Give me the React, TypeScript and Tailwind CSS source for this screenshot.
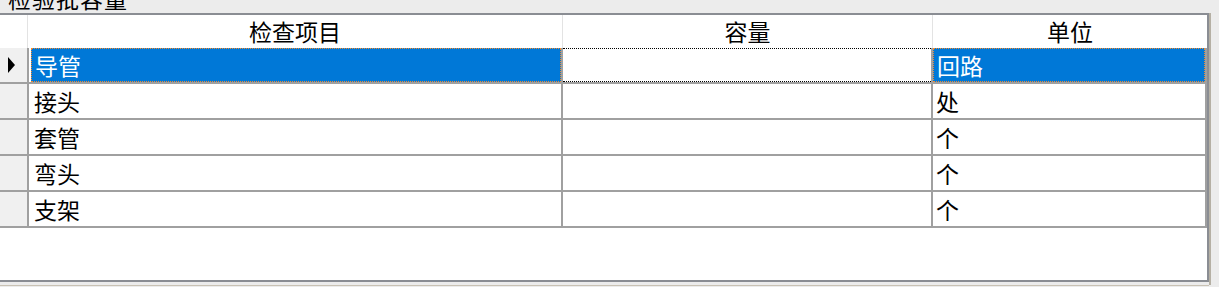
import React from 'react';

interface Row {
  name: string;
  qty: string;
  unit: string;
}

const rows: Row[] = [
  { name: '导管', qty: '', unit: '回路' },
  { name: '接头', qty: '', unit: '处' },
  { name: '套管', qty: '', unit: '个' },
  { name: '弯头', qty: '', unit: '个' },
  { name: '支架', qty: '', unit: '个' },
];

const font = { fontFamily: '"Noto Sans CJK SC", "Noto Sans", sans-serif' };

function RowArrow() {
  return (
    <svg width="7" height="16" viewBox="0 0 7 16">
      <polygon points="0,0 7,8 0,16" fill="#000" />
    </svg>
  );
}

export default function App() {
  return (
    <div className="w-[1219px] h-[287px] bg-[#ececec] overflow-hidden text-black" style={font}>
      {/* group caption, clipped at the top */}
      <div className="h-[13px] overflow-hidden pl-[8px]">
        <div className="-mt-[15px] text-[23px] leading-[26px] tracking-[1px]">检验批容量</div>
      </div>

      <div className="flex">
        <div className="w-[1209px] h-[269px] border-t-2 border-r-2 border-b-2 border-[#8a8d93] bg-white">
          {/* header */}
          <div className="flex h-[33px] text-[23px] leading-none">
            <div className="w-[27px] bg-white" />
            <div className="w-[1px] bg-[#e3e3e3]" />
            <div className="w-[534px] flex items-center justify-center">检查项目</div>
            <div className="w-[1px] bg-[#e3e3e3]" />
            <div className="w-[369px] flex items-center justify-center">容量</div>
            <div className="w-[1px] bg-[#e3e3e3]" />
            <div className="flex-1 flex items-center justify-center">单位</div>
          </div>

          {rows.map((r, i) => {
            const sel = i === 0;
            return (
              <div key={r.name} className="flex h-[36px] border-b-2 border-[#a0a0a0] text-[23px] leading-none">
                <div className="w-[27px] bg-[#f0f0f0] flex items-center pl-[8px]">
                  {sel && <RowArrow />}
                </div>
                <div className="w-[2px] bg-[#a0a0a0]" />
                <div className="w-[532px] flex">
                  {sel ? (
                    <div className="flex-1 ml-[2px] bg-[#0078d7] text-white border border-dotted border-[#f58b2c] flex items-center pl-[3px]">
                      {r.name}
                    </div>
                  ) : (
                    <div className="flex-1 flex items-center pl-[5px]">{r.name}</div>
                  )}
                </div>
                <div className="w-[2px] bg-[#a0a0a0]" />
                <div className="w-[368px] flex">
                  {sel ? (
                    <div className="flex-1 border-t border-b border-dotted border-black flex items-center">{r.qty}</div>
                  ) : (
                    <div className="flex-1 flex items-center">{r.qty}</div>
                  )}
                </div>
                <div className="w-[2px] bg-[#a0a0a0]" />
                <div className="w-[272px] flex">
                  {sel ? (
                    <div className="flex-1 bg-[#0078d7] text-white border border-dotted border-[#f58b2c] flex items-center pl-[3px]">
                      {r.unit}
                    </div>
                  ) : (
                    <div className="flex-1 flex items-center pl-[3px]">{r.unit}</div>
                  )}
                </div>
                <div className="w-[2px] bg-[#a0a0a0]" />
              </div>
            );
          })}
        </div>
        <div className="w-[2px] h-[272px] bg-[#b5b0a4]" />
      </div>
      <div className="w-[1209px] h-[1px] bg-[#c9c2b4]" />
    </div>
  );
}
